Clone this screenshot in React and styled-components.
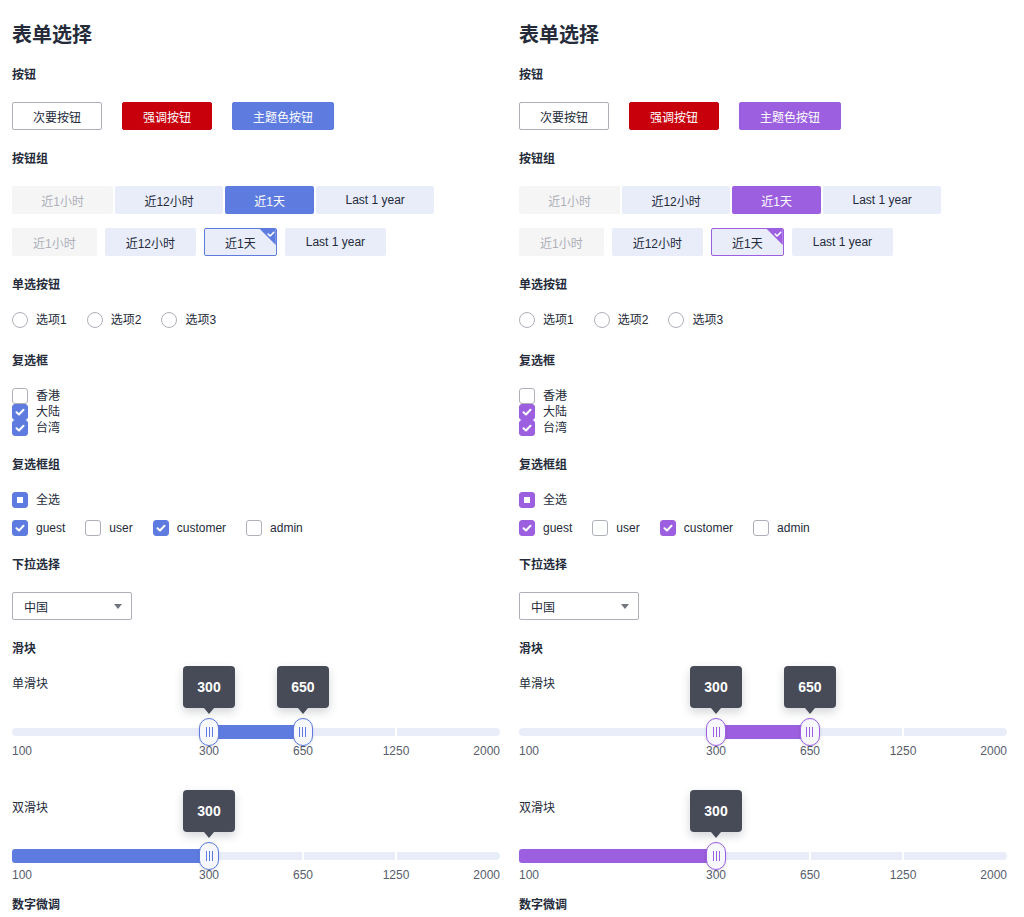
import React from 'react';
import styled, {createGlobalStyle, ThemeProvider, css} from "styled-components";

const GlobalStyle = createGlobalStyle`
  html, body {
    margin: 0;
    padding: 0;
    overflow: hidden;
    background: #ffffff;
  }
  body {
    font-family: "Liberation Sans", "Noto Sans CJK SC", sans-serif;
    font-size: 12px;
    color: #252b3a;
  }
  * {
    box-sizing: border-box;
  }
`

const Page = styled.div`
  display: grid;
  grid-template-columns: 488px 488px;
  column-gap: 19px;
  padding: 20px 12px 0;
`
const Column = styled.div`
  display: flex;
  flex-direction: column;
`
const Title = styled.h1`
  margin: 0 0 16px;
  padding-top: 1px;
  height: 28px;
  font-size: 20px;
  line-height: 28px;
  font-weight: 700;
  color: #252b3a;
`
const Section = styled.section`
  margin-bottom: ${props => props.$after ?? 18}px;
`
const Label = styled.h3`
  margin: 0 0 18px;
  padding-top: 1px;
  height: 20px;
  font-size: 12px;
  line-height: 20px;
  font-weight: 700;
  color: #252b3a;
`
const Row = styled.div`
  display: flex;
  align-items: center;
  gap: ${props => props.$gap ?? 0}px;
  margin-top: ${props => props.$top ?? 0}px;
  padding-bottom: ${props => props.$bottom ?? 0}px;
`

// кнопки
const Button = styled.button`
  height: 28px;
  min-width: 80px;
  padding: 0 20px;
  border-radius: 2px;
  font-family: inherit;
  font-size: 12px;
  border: 1px solid transparent;
  cursor: pointer;
  ${props => props.$kind === 'common' && css`
    background: #ffffff;
    border-color: #adb0b8;
    color: #252b3a;
  `}
  ${props => props.$kind === 'danger' && css`
    background: #c7000b;
    border-color: #c7000b;
    color: #ffffff;
  `}
  ${props => props.$kind === 'primary' && css`
    background: ${props.theme.brand};
    border-color: ${props.theme.brand};
    color: #ffffff;
  `}
`

// группа кнопок
const Segment = styled.div`
  position: relative;
  height: 28px;
  display: flex;
  align-items: center;
  padding: 0 ${props => props.$pad}px;
  border: 1px solid transparent;
  border-radius: 2px;
  background: #e9edfa;
  color: #252b3a;
  font-size: 12px;
  white-space: nowrap;
  overflow: hidden;
  ${props => props.$state === 'disabled' && css`
    background: #f5f5f6;
    color: #adb0b8;
  `}
  ${props => props.$state === 'active' && css`
    background: ${props.theme.brand};
    color: #ffffff;
  `}
  ${props => props.$state === 'checked' && css`
    border-color: ${props.theme.brand};
  `}
`
const Corner = styled.span`
  position: absolute;
  top: 0;
  right: 0;
  width: 16px;
  height: 16px;
  background: ${props => props.theme.brand};
  clip-path: polygon(0 0, 100% 0, 100% 100%);
  svg {
    position: absolute;
    top: 1px;
    right: 1px;
  }
`

// радио и чекбоксы
const Option = styled.label`
  display: flex;
  align-items: center;
  gap: 8px;
  margin-right: 20px;
  line-height: 16px;
  font-size: 12px;
  color: #252b3a;
`
const Circle = styled.span`
  width: 16px;
  height: 16px;
  border-radius: 50%;
  border: 1px solid #adb0b8;
  background: #ffffff;
`
const Box = styled.span`
  width: 16px;
  height: 16px;
  border-radius: 3px;
  border: 1px solid ${props => props.$on ? props.theme.brand : '#adb0b8'};
  background: ${props => props.$on ? props.theme.brand : '#ffffff'};
  display: flex;
  align-items: center;
  justify-content: center;
`
const Square = styled.span`
  width: 6px;
  height: 6px;
  background: #ffffff;
`
const Stack = styled.div`
  display: flex;
  flex-direction: column;
`

// выпадающий список
const Select = styled.div`
  width: 120px;
  height: 28px;
  border: 1px solid #adb0b8;
  border-radius: 2px;
  display: flex;
  align-items: center;
  justify-content: space-between;
  padding: 0 9px 0 11px;
  font-size: 12px;
  color: #252b3a;
`
const Arrow = styled.span`
  width: 0;
  height: 0;
  border-left: 4px solid transparent;
  border-right: 4px solid transparent;
  border-top: 5px solid #71757f;
`

// слайдер
const SliderItem = styled.div`
  & + & {
    margin-top: 42px;
  }
`
const SubLabel = styled.div`
  font-size: 12px;
  line-height: 16px;
  color: #252b3a;
  margin-bottom: 30px;
`
const Track = styled.div`
  position: relative;
  height: 20px;
`
const Rail = styled.div`
  position: absolute;
  left: 0;
  right: 0;
  top: 6px;
  height: 8px;
  border-radius: 4px;
  background: #e9edfa;
`
const Divider = styled.span`
  position: absolute;
  top: 6px;
  width: 2px;
  height: 8px;
  background: #ffffff;
  transform: translateX(-50%);
`
const Fill = styled.div`
  position: absolute;
  top: 3px;
  height: 14px;
  border-radius: 3px;
  background: ${props => props.theme.brand};
`
const Thumb = styled.div`
  position: absolute;
  top: 50%;
  width: 20px;
  height: 28px;
  transform: translate(-50%, -50%);
  border: 1px solid ${props => props.theme.brand};
  border-radius: 10px;
  background: #f7f8fe;
  box-shadow: 0 1px 3px rgba(37, 43, 58, 0.15);
  display: flex;
  align-items: center;
  justify-content: center;
  gap: 2px;
  z-index: 2;
`
const Grip = styled.span`
  width: 1px;
  height: 10px;
  background: ${props => props.theme.brand};
`
const Tip = styled.div`
  position: absolute;
  left: 50%;
  bottom: calc(100% + 11px);
  transform: translateX(-50%);
  width: 52px;
  height: 42px;
  border-radius: 4px;
  background: #474b58;
  color: #ffffff;
  font-size: 14px;
  font-weight: 700;
  line-height: 42px;
  text-align: center;
  box-shadow: 0 4px 10px rgba(37, 43, 58, 0.2);

  &::after {
    content: "";
    position: absolute;
    left: 50%;
    top: 100%;
    transform: translateX(-50%);
    border-left: 5px solid transparent;
    border-right: 5px solid transparent;
    border-top: 6px solid #474b58;
  }
`
const Marks = styled.div`
  position: relative;
  height: 16px;
`
const Mark = styled.span`
  position: absolute;
  top: 1px;
  font-size: 12px;
  line-height: 16px;
  color: #575d6c;
  white-space: nowrap;
  transform: translateX(${props => props.$align === 'start' ? '0' : props.$align === 'end' ? '-100%' : '-50%'});
`

const Check = ({size = 10}) => (
  <svg width={size} height={size} viewBox="0 0 10 10" fill="none">
    <path d="M1.5 5.2 L4 7.5 L8.5 2.8" stroke="#ffffff" strokeWidth="2" strokeLinecap="round" strokeLinejoin="round"/>
  </svg>
)

const marks = [
  {label: '100', pos: 0, align: 'start'},
  {label: '300', pos: 40.37},
  {label: '650', pos: 59.63},
  {label: '1250', pos: 78.69},
  {label: '2000', pos: 100, align: 'end'},
]

const Slider = ({title, from, to, thumbs}) => (
  <SliderItem>
    <SubLabel>{title}</SubLabel>
    <Track>
      <Rail/>
      {marks.slice(1, -1).map(m => <Divider key={m.label} style={{left: `${m.pos}%`}}/>)}
      <Fill style={{left: `${from}%`, width: `${to - from}%`}}/>
      {thumbs.map(t => (
        <Thumb key={t.value} style={{left: `${t.pos}%`}}>
          <Grip/><Grip/><Grip/>
          <Tip>{t.value}</Tip>
        </Thumb>
      ))}
    </Track>
    <Marks>
      {marks.map(m => <Mark key={m.label} $align={m.align} style={{left: `${m.pos}%`}}>{m.label}</Mark>)}
    </Marks>
  </SliderItem>
)

const groupItems = [
  {text: '近1小时', state: 'disabled'},
  {text: '近12小时'},
  {text: '近1天', state: 'active'},
  {text: 'Last 1 year'},
]

const FormDemo = ({brand}) => (
  <ThemeProvider theme={{brand}}>
    <Column>
      <Title>表单选择</Title>

      <Section>
        <Label>按钮</Label>
        <Row $gap={20}>
          <Button $kind="common">次要按钮</Button>
          <Button $kind="danger">强调按钮</Button>
          <Button $kind="primary">主题色按钮</Button>
        </Row>
      </Section>

      <Section>
        <Label>按钮组</Label>
        <Row $gap={2}>
          {groupItems.map(i => <Segment key={i.text} $pad={28.25} $state={i.state}>{i.text}</Segment>)}
        </Row>
        <Row $gap={8} $top={14}>
          {groupItems.map(i => (
            <Segment key={i.text} $pad={20} $state={i.state === 'active' ? 'checked' : i.state}>
              {i.text}
              {i.state === 'active' && <Corner><Check size={8}/></Corner>}
            </Segment>
          ))}
        </Row>
      </Section>

      <Section>
        <Label>单选按钮</Label>
        <Row $bottom={4}>
          {['选项1', '选项2', '选项3'].map(o => <Option key={o}><Circle/>{o}</Option>)}
        </Row>
      </Section>

      <Section>
        <Label>复选框</Label>
        <Stack>
          <Option><Box/>香港</Option>
          <Option><Box $on><Check/></Box>大陆</Option>
          <Option><Box $on><Check/></Box>台湾</Option>
        </Stack>
      </Section>

      <Section>
        <Label>复选框组</Label>
        <Row>
          <Option><Box $on><Square/></Box>全选</Option>
        </Row>
        <Row $top={12}>
          <Option><Box $on><Check/></Box>guest</Option>
          <Option><Box/>user</Option>
          <Option><Box $on><Check/></Box>customer</Option>
          <Option><Box/>admin</Option>
        </Row>
      </Section>

      <Section>
        <Label>下拉选择</Label>
        <Select>
          中国
          <Arrow/>
        </Select>
      </Section>

      <Section $after={12}>
        <Label>滑块</Label>
        <Slider title="单滑块" from={40.37} to={59.63}
                thumbs={[{value: 300, pos: 40.37}, {value: 650, pos: 59.63}]}/>
        <Slider title="双滑块" from={0} to={40.37}
                thumbs={[{value: 300, pos: 40.37}]}/>
      </Section>

      <Section>
        <Label>数字微调</Label>
      </Section>
    </Column>
  </ThemeProvider>
)

const App = () => (
  <>
    <GlobalStyle/>
    <Page>
      <FormDemo brand="#5e7ce0"/>
      <FormDemo brand="#9b5fdf"/>
    </Page>
  </>
);

export default App;
